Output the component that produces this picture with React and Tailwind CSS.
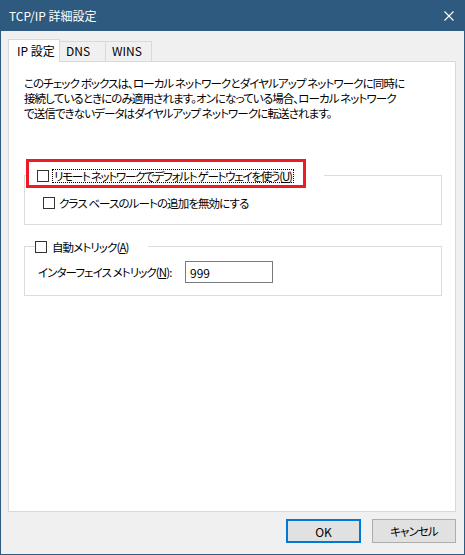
import React from 'react';

const font = "font-['Noto_Sans_CJK_JP',sans-serif] [font-feature-settings:'palt']";
// 日本語の文は Yu Gothic UI 程度の幅に詰める
const jp = 'text-[11.5px] tracking-[-0.9px] whitespace-nowrap';

// 標準のチェックボックス (未チェック)
const CheckBox = () => (
  <span className="block w-[12px] h-[12px] border border-[#333333] bg-white shrink-0" />
);

const Tab = ({ label, active }) =>
  active ? (
    <div className="relative z-10 -mb-px h-[23px] w-[52px] pl-[8px] pt-[3px] border-x border-t border-[#d9d9d9] bg-white whitespace-nowrap">
      {label}
    </div>
  ) : (
    <div className="h-[20px] w-[46px] pl-[6px] pt-[1px] border-r border-t border-[#d9d9d9] bg-[#f0f0f0]">
      {label}
    </div>
  );

const App = () => {
  return (
    <div className={`w-[465px] h-[555px] flex flex-col bg-[#2d5a7e] text-[12px] leading-[15px] text-black ${font}`}>
      {/* タイトルバー */}
      <div className="h-[31px] shrink-0 flex items-center justify-between pl-[9px] pr-[11px] text-white">
        <span>TCP/IP 詳細設定</span>
        <svg width="10" height="10" viewBox="0 0 10 10">
          <path d="M0.5 0.5 L9.5 9.5 M9.5 0.5 L0.5 9.5" stroke="white" strokeWidth="1.1" />
        </svg>
      </div>

      <div className="flex-1 mx-[1px] mb-[1px] bg-[#f0f0f0] pl-[7px] pr-[8px] pt-[8px] flex flex-col">
        {/* タブ */}
        <div className="flex items-end">
          <Tab label="IP 設定" active />
          <Tab label="DNS" />
          <Tab label="WINS" />
        </div>

        {/* タブの中身 */}
        <div className="h-[451px] border border-[#d9d9d9] bg-white pl-[15px] pt-[14px]">
          <p className={jp}>
            このチェック ボックスは、ローカル ネットワークとダイヤルアップ ネットワークに同時に
            <br />
            接続しているときにのみ適用されます。オンになっている場合、ローカル ネットワーク
            <br />
            で送信できないデータはダイヤルアップ ネットワークに転送されます。
          </p>

          {/* ゲートウェイ グループ */}
          <div className="mt-[54px] w-[418px] border border-[#dcdcdc] pl-[18px] pb-[13px]">
            <div className="-mt-[17px] -ml-[17px] w-fit flex bg-white pr-[18px]">
              <div className="h-[29px] w-[280px] border-[3px] border-[#ed1c24] flex items-center pt-[5px] pl-[8px] gap-[3px]">
                <CheckBox />
                <span className="border border-dotted border-black px-[1px] leading-[12px] text-[11.5px] tracking-[-1.25px] whitespace-nowrap">
                  リモート ネットワークでデフォルト ゲートウェイを使う(<span className="underline">U</span>)
                </span>
              </div>
            </div>
            <div className="mt-[7px] h-[16px] flex items-center gap-[4px]">
              <CheckBox />
              <span className={jp}>クラス ベースのルートの追加を無効にする</span>
            </div>
          </div>

          {/* メトリック グループ */}
          <div className="mt-[21px] w-[418px] border border-[#dcdcdc] pl-[13px] pb-[12px]">
            <div className="-mt-[7px] -ml-[3px] w-fit h-[14px] flex items-center gap-[5px] bg-white pr-[20px]">
              <CheckBox />
              <span className={jp}>
                自動メトリック(<span className="underline">A</span>)
              </span>
            </div>
            <div className="mt-[7px] h-[22px] flex items-center">
              <span className={`w-[147px] ${jp}`}>
                インターフェイス メトリック(<span className="underline">N</span>):
              </span>
              <div className="w-[88px] h-[22px] border border-[#7a7a7a] bg-white flex items-center pl-[4px]">
                999
              </div>
            </div>
          </div>
        </div>

        {/* ボタン */}
        <div className="mt-[7px] flex justify-end gap-[11px]">
          <button className="w-[75px] h-[24px] border-2 border-[#0078d7] bg-[#e1e1e1]">OK</button>
          <button className={`w-[84px] h-[24px] border border-[#adadad] bg-[#e1e1e1] ${jp}`}>キャンセル</button>
        </div>
      </div>
    </div>
  );
};

export default App;
